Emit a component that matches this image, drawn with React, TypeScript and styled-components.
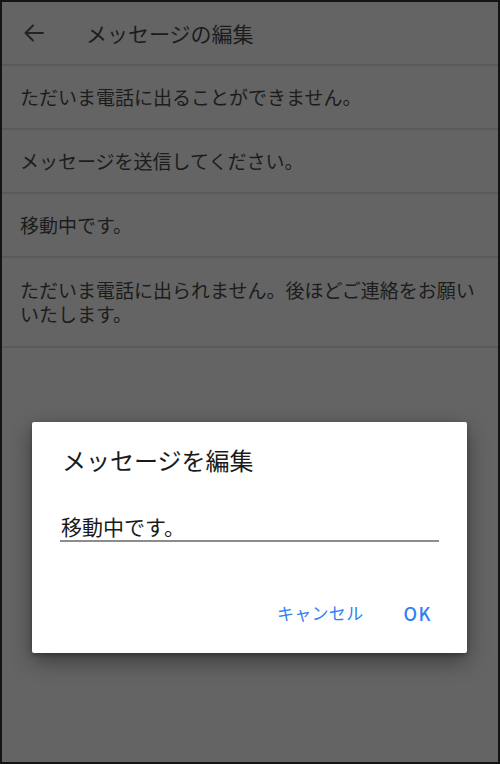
import React from 'react';
import styled, { createGlobalStyle } from 'styled-components';

const GlobalStyle = createGlobalStyle`
  html, body {
    margin: 0;
    padding: 0;
    background: #111;
  }

  * {
    box-sizing: border-box;
  }
`;

const Frame = styled.div`
  position: relative;
  width: 500px;
  height: 764px;
  border: 2px solid #141414;
  background-color: #646464;
  font-family: 'Noto Sans CJK JP', 'Noto Sans', sans-serif;
  color: #1c1c1c;
  overflow: hidden;
`;

const Header = styled.header`
  display: flex;
  align-items: center;
  gap: 40px;
  height: 64px;
  padding-left: 20px;
  border-bottom: 2px solid #5a5a5a;
`;

const BackButton = styled.button`
  display: flex;
  padding: 0;
  border: 0;
  background: none;
  color: #222;

  > svg {
    display: block;
  }
`;

const Title = styled.h1`
  margin: 0;
  font-weight: 400;
  font-size: 21px;
  line-height: 28px;
`;

const List = styled.ul`
  margin: 0;
  padding: 0;
  list-style: none;
`;

const Row = styled.li<{ $multiline?: boolean }>`
  display: flex;
  align-items: center;
  min-height: 64px;
  padding: ${({ $multiline }) => ($multiline ? '20px 14px 20px 18px' : '0 14px 0 18px')};
  border-bottom: 2px solid #5a5a5a;
  font-size: 19px;
  line-height: 24px;
`;

const Dialog = styled.div`
  position: absolute;
  top: 420px;
  left: 30px;
  display: flex;
  flex-direction: column;
  width: 435px;
  height: 231px;
  padding: 23px 28px 0;
  border-radius: 2px;
  background-color: #fff;
  box-shadow: 0 8px 22px rgba(0, 0, 0, 0.4), 0 2px 4px rgba(0, 0, 0, 0.25);
`;

const DialogTitle = styled.h2`
  margin: 0 0 0 2px;
  font-weight: 400;
  font-size: 24px;
  line-height: 30px;
  color: #1a1a1a;
`;

const Field = styled.input`
  width: 100%;
  height: 30px;
  margin-top: 37px;
  padding: 0 0 0 1px;
  border: 0;
  border-bottom: 2px solid #8c8c8c;
  outline: none;
  background: none;
  font-family: inherit;
  font-size: 21px;
  line-height: 28px;
  color: #1a1a1a;
`;

const Actions = styled.div`
  display: flex;
  justify-content: flex-end;
  align-items: center;
  gap: 40px;
  margin-top: 59px;
  padding-right: 7px;
`;

const ActionButton = styled.button<{ $strong?: boolean }>`
  padding: 0;
  border: 0;
  background: none;
  font-family: 'Noto Sans CJK JP', 'Noto Sans', sans-serif;
  font-size: ${({ $strong }) => ($strong ? '18px' : '17px')};
  font-weight: ${({ $strong }) => ($strong ? 500 : 400)};
  letter-spacing: ${({ $strong }) => ($strong ? '1.5px' : '0.3px')};
  line-height: 24px;
  color: #2f80f2;
`;

const messages = [
  'ただいま電話に出ることができません。',
  'メッセージを送信してください。',
  '移動中です。',
  'ただいま電話に出られません。後ほどご連絡をお願いいたします。',
];

export default function App() {
  return (
    <>
      <GlobalStyle />
      <Frame>
        <Header>
          <BackButton aria-label="戻る">
            <svg width="24" height="24" viewBox="0 0 24 24" fill="none">
              <path
                d="M21 12H4M11 4.5L3.5 12L11 19.5"
                stroke="currentColor"
                strokeWidth="2"
                strokeLinecap="round"
                strokeLinejoin="round"
              />
            </svg>
          </BackButton>
          <Title>メッセージの編集</Title>
        </Header>
        <List>
          {messages.map((text, i) => (
            <Row key={text} $multiline={i === messages.length - 1}>
              {text}
            </Row>
          ))}
        </List>
        <Dialog role="dialog">
          <DialogTitle>メッセージを編集</DialogTitle>
          <Field defaultValue="移動中です。" readOnly />
          <Actions>
            <ActionButton>キャンセル</ActionButton>
            <ActionButton $strong>OK</ActionButton>
          </Actions>
        </Dialog>
      </Frame>
    </>
  );
}
